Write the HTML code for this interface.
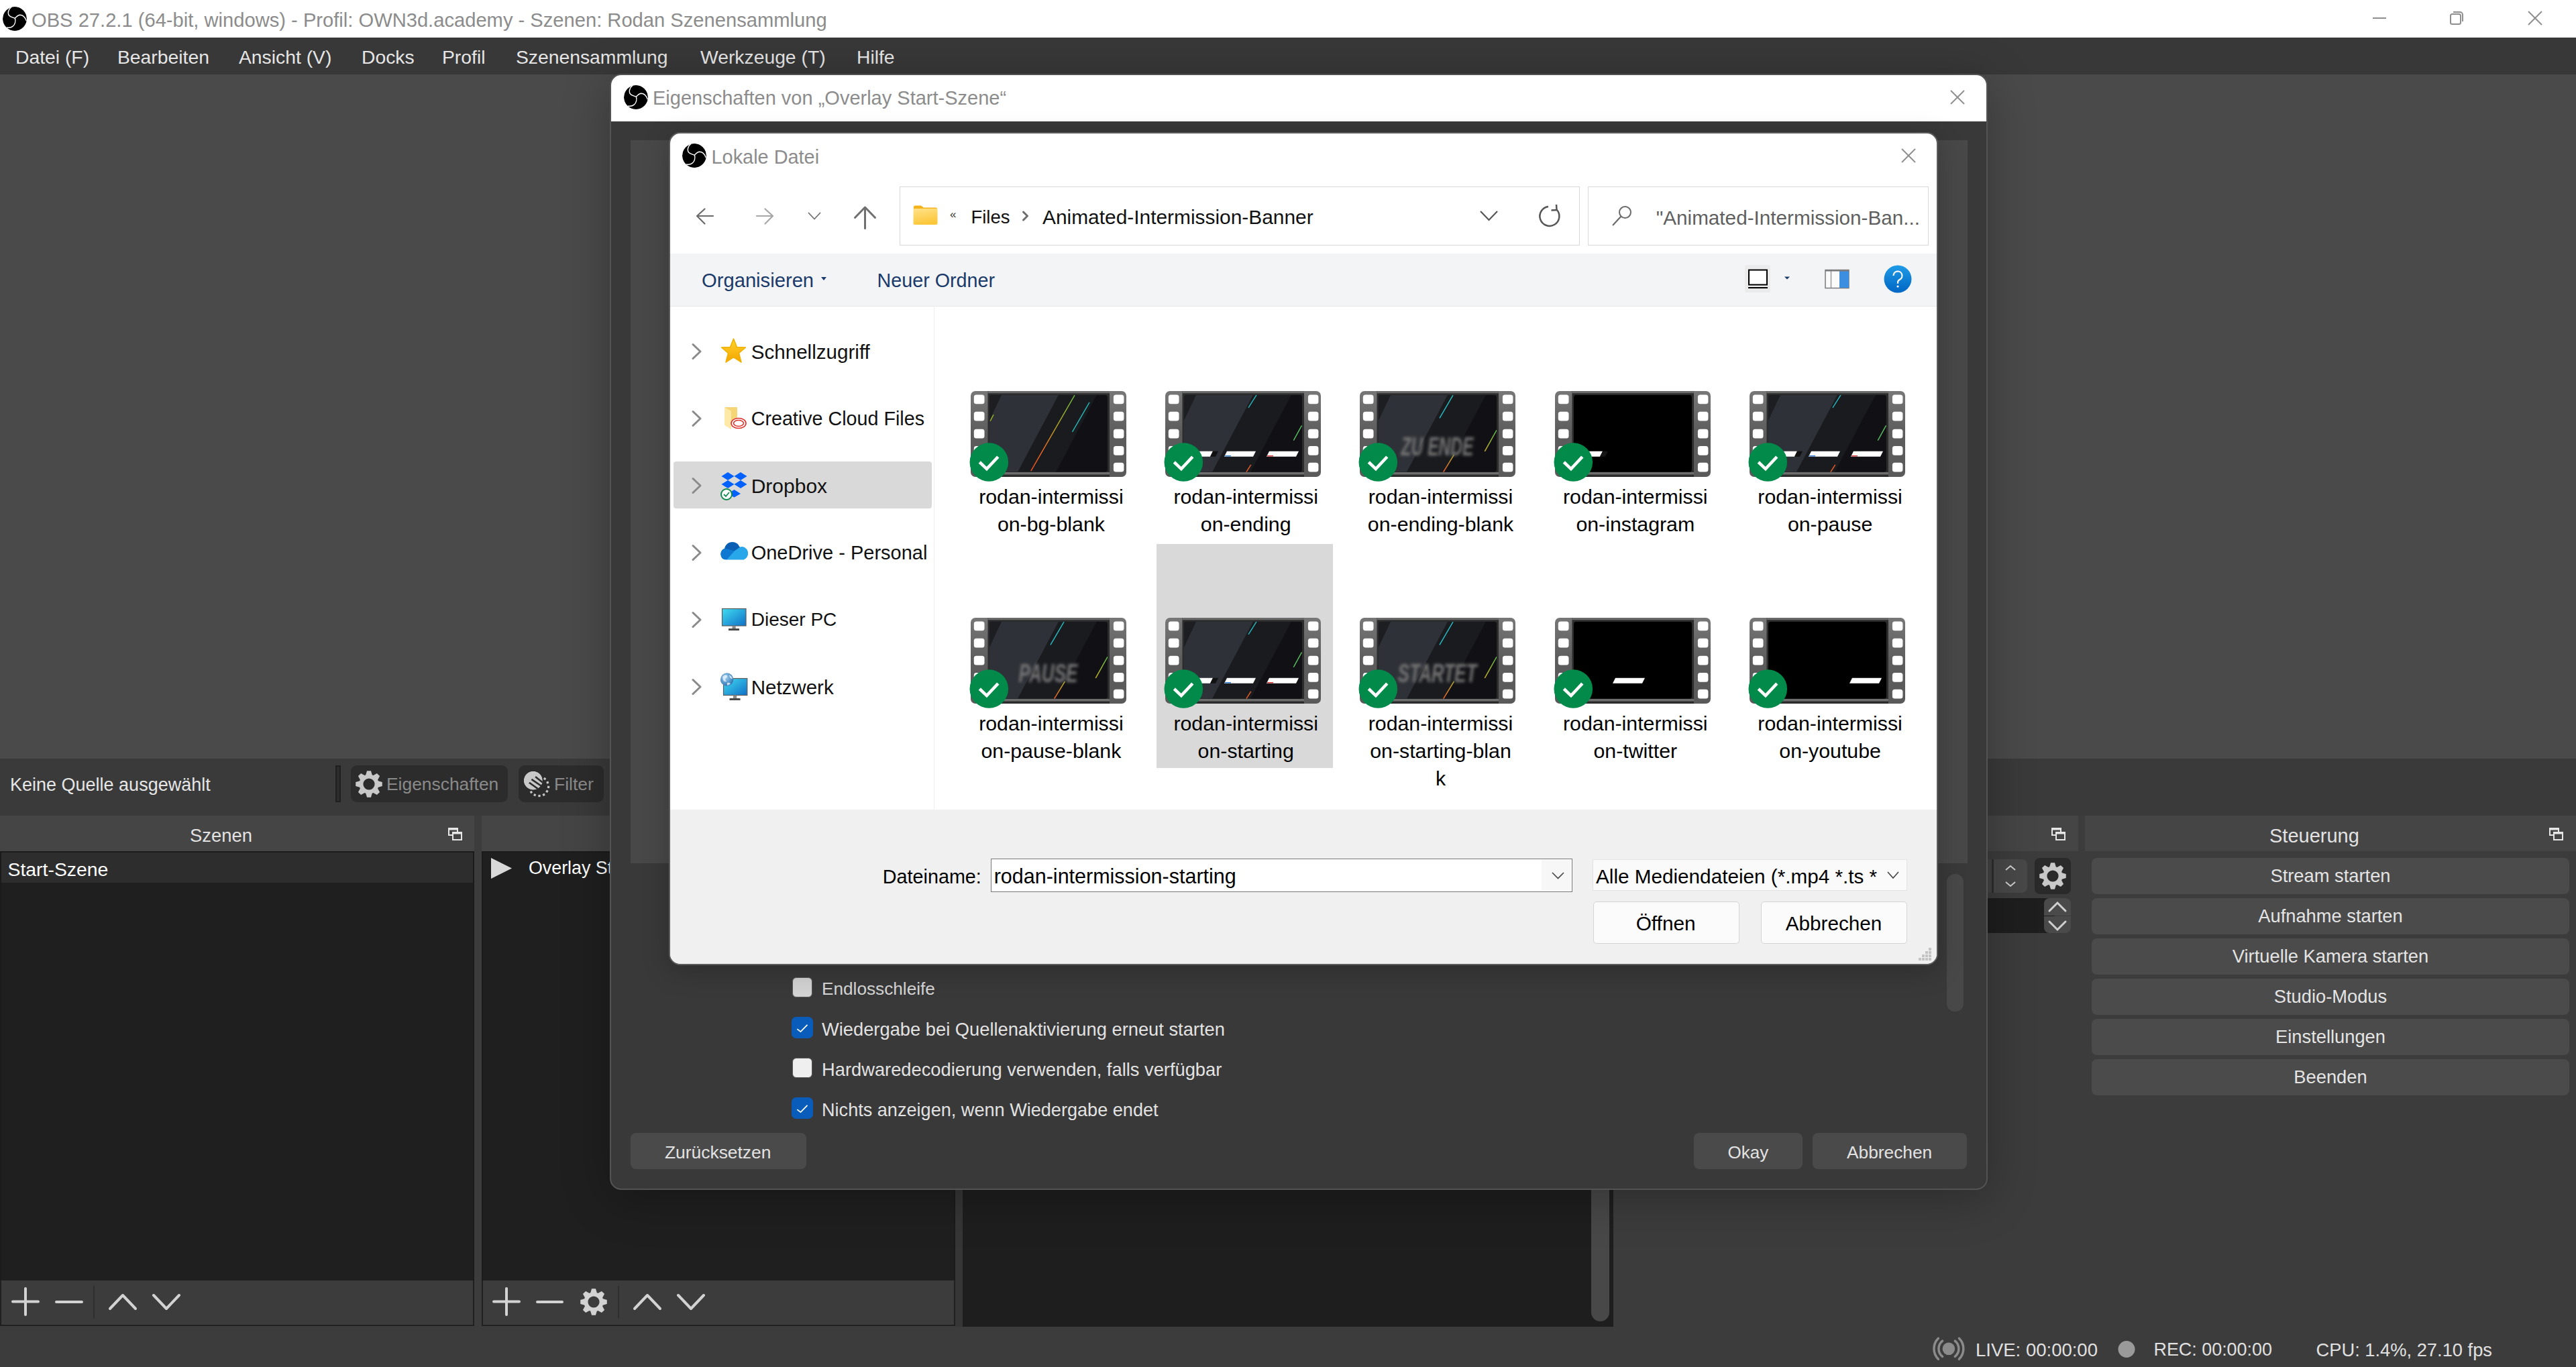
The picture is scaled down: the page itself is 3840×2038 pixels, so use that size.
<!DOCTYPE html>
<html><head><meta charset="utf-8">
<style>
*{box-sizing:border-box;margin:0;padding:0}
html,body{width:3840px;height:2038px;overflow:hidden;background:#3c3c3c;font-family:"Liberation Sans",sans-serif}
.a{position:absolute}
.t{position:absolute;white-space:pre;line-height:1}
svg{position:absolute;overflow:visible}
#menubar span{position:absolute;top:71px;font-size:28.3px;color:#e6e6e6;white-space:pre;line-height:1}
.dockhead{position:absolute;top:1216px;height:53px;background:#454545}
.docklist{position:absolute;top:1269px;height:640px;background:#1f1f1f;border:2px solid #1b1b1b;border-bottom:none}
.docktool{position:absolute;top:1909px;height:68px;background:#3c3c3c;border:2px solid #202020;border-top:none}
.dtitle{position:absolute;top:15.5px;font-size:27.4px;color:#e2e2e2;white-space:pre;line-height:1}
.ctrlbtn{position:absolute;left:3118px;width:712px;height:54px;background:#4b4b4b;border-radius:8px;color:#e4e4e4;font-size:27.3px;text-align:center;line-height:54px;white-space:pre}
.fn{width:300px;text-align:center;font-size:30.3px;color:#000}
.ico{stroke:#d2d2d2;stroke-width:4;fill:none;stroke-linecap:round;stroke-linejoin:round}
</style></head>
<body>
<!-- ===== TITLE BAR ===== -->
<div class="a" style="left:0;top:0;width:3840px;height:56px;background:#fff"></div>
<svg style="left:4px;top:10px" width="36" height="36" viewBox="0 0 100 100" id="obslogo">
  <defs><clipPath id="oc"><circle cx="50" cy="50" r="50"/></clipPath></defs>
  <g id="obsg" clip-path="url(#oc)">
    <circle cx="50" cy="50" r="50" fill="#000"/>
    <g fill="none" stroke="#fff" stroke-linecap="butt">
      <path d="M36 1 C 24 10, 19 27, 27 37 C 33 44, 44 45, 51 48" stroke-width="4"/>
      <path d="M51 48 C 55 60, 51 74, 42 81 C 35 87, 26 88, 16 86" stroke-width="4"/>
      <path d="M51 48 C 56 42, 63 35, 71 34 C 81 34, 92 42, 98 58" stroke-width="4"/>
    </g>
  </g>
</svg>
<div class="t" style="left:47px;top:15.6px;font-size:29.15px;color:#8c8c8c">OBS 27.2.1 (64-bit, windows) - Profil: OWN3d.academy - Szenen: Rodan Szenensammlung</div>
<svg style="left:0;top:0" width="3840" height="56">
  <g stroke="#8f8f8f" stroke-width="2" fill="none">
    <line x1="3537" y1="27" x2="3557" y2="27"/>
    <rect x="3653" y="21" width="15" height="15" rx="2.5"/>
    <path d="M3657 18 h10 a4 4 0 0 1 4 4 v10"/>
    <line x1="3769" y1="17" x2="3789" y2="37"/>
    <line x1="3789" y1="17" x2="3769" y2="37"/>
  </g>
</svg>

<!-- ===== MENU BAR ===== -->
<div id="menubar">
  <div class="a" style="left:0;top:56px;width:3840px;height:55px;background:#383838"></div>
  <span style="left:23px">Datei (F)</span>
  <span style="left:175px">Bearbeiten</span>
  <span style="left:356px">Ansicht (V)</span>
  <span style="left:539px">Docks</span>
  <span style="left:659px">Profil</span>
  <span style="left:769px">Szenensammlung</span>
  <span style="left:1044px">Werkzeuge (T)</span>
  <span style="left:1277px">Hilfe</span>
</div>

<!-- ===== PREVIEW ===== -->
<div class="a" style="left:0;top:111px;width:3840px;height:1020px;background:#4a4a4a"></div>

<!-- ===== SOURCE TOOLBAR ===== -->
<div class="a" style="left:0;top:1131px;width:3840px;height:85px;background:#3a3a3a"></div>
<div class="t" style="left:15px;top:1156.5px;font-size:27px;color:#e6e6e6">Keine Quelle ausgewählt</div>
<div class="a" style="left:500px;top:1141px;width:8px;height:55px;background:#1e1e1e;border:2px solid #202020"></div>
<div class="a" style="left:502px;top:1143px;width:4px;height:51px;background:#2c2c2c"></div>
<div class="a" style="left:523px;top:1141px;width:234px;height:55px;background:#2c2c2c;border-radius:9px"></div>
<svg style="left:526px;top:1145px" width="48" height="48"><path fill="#c8c8c8" fill-rule="evenodd" d="M19.25 10.20 L21.04 4.22 L26.96 4.22 L28.75 10.20 L30.40 10.88 L35.90 7.92 L40.08 12.10 L37.12 17.60 L37.80 19.25 L43.78 21.04 L43.78 26.96 L37.80 28.75 L37.12 30.40 L40.08 35.90 L35.90 40.08 L30.40 37.12 L28.75 37.80 L26.96 43.78 L21.04 43.78 L19.25 37.80 L17.60 37.12 L12.10 40.08 L7.92 35.90 L10.88 30.40 L10.20 28.75 L4.22 26.96 L4.22 21.04 L10.20 19.25 L10.88 17.60 L7.92 12.10 L12.10 7.92 L17.60 10.88Z M32.60 24.00 A8.6 8.6 0 1 0 15.40 24.00 A8.6 8.6 0 1 0 32.60 24.00Z"/></svg>
<div class="t" style="left:576px;top:1156px;font-size:26.4px;color:#8a8a8a">Eigenschaften</div>
<div class="a" style="left:773px;top:1141px;width:127px;height:55px;background:#2c2c2c;border-radius:9px"></div>
<svg style="left:770px;top:1140px" width="60" height="60">
  <defs><clipPath id="fc"><circle cx="24.8" cy="23.7" r="14"/></clipPath></defs>
  <g clip-path="url(#fc)"><circle cx="24.8" cy="23.7" r="14" fill="#c8c8c8"/>
  <g stroke="#2c2c2c" stroke-width="2.6"><line x1="28.1" y1="18" x2="42" y2="29"/><line x1="22.4" y1="21.9" x2="38" y2="32.5"/><line x1="18.9" y1="26.8" x2="34" y2="37.5"/></g>
  <polygon points="44,23.5 27.5,42 50,50 50,20" fill="#2c2c2c"/>
  </g>
  <path d="M24.8 23.7 L40 14 L44 40 L18 42Z" fill="none"/>
  <g fill="#c8c8c8"><rect x="40.5" y="19.5" width="3.2" height="3.2" transform="rotate(-50 42.1 21.1)"/><rect x="44.7" y="25.0" width="3.2" height="3.2" transform="rotate(-21 46.3 26.6)"/><rect x="46.0" y="31.8" width="3.2" height="3.2" transform="rotate(7 47.6 33.4)"/><rect x="43.8" y="38.1" width="3.2" height="3.2" transform="rotate(34 45.4 39.7)"/><rect x="39.0" y="43.2" width="3.2" height="3.2" transform="rotate(61 40.6 44.8)"/><rect x="32.4" y="44.9" width="3.2" height="3.2" transform="rotate(88 34.0 46.5)"/><rect x="25.6" y="43.6" width="3.2" height="3.2" transform="rotate(115 27.2 45.2)"/><rect x="20.3" y="39.4" width="3.2" height="3.2" transform="rotate(141 21.9 41.0)"/></g>
</svg>
<div class="t" style="left:826px;top:1156px;font-size:26.5px;color:#8a8a8a">Filter</div>

<!-- ===== DOCKS ===== -->
<div class="dockhead" style="left:0;width:707px"><span class="dtitle" style="left:283px">Szenen</span></div>
<div class="docklist" style="left:0;width:707px"></div>
<div class="a" style="left:2px;top:1271px;width:703px;height:45px;background:#2d2d2d"></div>
<div class="t" style="left:11.5px;top:1281.8px;font-size:28.4px;color:#fff">Start-Szene</div>
<div class="docktool" style="left:0;width:707px"></div>

<div class="dockhead" style="left:718px;width:706px"></div>
<div class="docklist" style="left:718px;width:706px"></div>
<svg style="left:732px;top:1279px" width="32" height="31"><path d="M0 0 L31 15.5 L0 31Z" fill="#d8d8d8"/></svg>
<div class="t" style="left:788px;top:1281px;font-size:26.8px;color:#fff">Overlay Start-Szene</div>
<div class="docktool" style="left:718px;width:706px"></div>

<div class="dockhead" style="left:1435px;width:970px"></div>
<div class="a" style="left:1435px;top:1269px;width:970px;height:709px;background:#1e1e1e"></div>
<div class="a" style="left:2372px;top:1300px;width:27px;height:670px;background:#484848;border-radius:0 0 14px 14px"></div>
<div class="a" style="left:1424px;top:1216px;width:11px;height:762px;background:#363636"></div>

<div class="dockhead" style="left:2415px;width:683px"></div>
<div class="dockhead" style="left:3108px;width:732px"><span class="dtitle" style="left:275px;top:15.5px;font-size:29px">Steuerung</span></div>
<div class="ctrlbtn" style="top:1279px">Stream starten</div>
<div class="ctrlbtn" style="top:1339px">Aufnahme starten</div>
<div class="ctrlbtn" style="top:1399px">Virtuelle Kamera starten</div>
<div class="ctrlbtn" style="top:1459px">Studio-Modus</div>
<div class="ctrlbtn" style="top:1519px">Einstellungen</div>
<div class="ctrlbtn" style="top:1579px">Beenden</div>

<!-- dock toolbars icons -->
<svg style="left:0;top:1900px" width="1440" height="80">
  <g class="ico">
    <line x1="38" y1="21" x2="38" y2="60"/><line x1="19" y1="40.5" x2="57" y2="40.5"/>
    <line x1="84" y1="41" x2="122" y2="41"/>
    <polyline points="164,51 183,31 202,51"/>
    <polyline points="229,31 248,51 267,31"/>
    <line x1="755" y1="21" x2="755" y2="60"/><line x1="736" y1="40.5" x2="774" y2="40.5"/>
    <line x1="801" y1="41" x2="838" y2="41"/>
    <polyline points="946,51 965,31 984,51"/>
    <polyline points="1011,31 1030,51 1049,31"/>
  </g>
  <line x1="140" y1="17" x2="140" y2="65" stroke="#2e2e2e" stroke-width="2"/>
  <line x1="922" y1="17" x2="922" y2="65" stroke="#2e2e2e" stroke-width="2"/>
</svg>
<svg style="left:861px;top:1917px" width="48" height="48"><path fill="#d2d2d2" fill-rule="evenodd" d="M19.25 10.20 L21.04 4.22 L26.96 4.22 L28.75 10.20 L30.40 10.88 L35.90 7.92 L40.08 12.10 L37.12 17.60 L37.80 19.25 L43.78 21.04 L43.78 26.96 L37.80 28.75 L37.12 30.40 L40.08 35.90 L35.90 40.08 L30.40 37.12 L28.75 37.80 L26.96 43.78 L21.04 43.78 L19.25 37.80 L17.60 37.12 L12.10 40.08 L7.92 35.90 L10.88 30.40 L10.20 28.75 L4.22 26.96 L4.22 21.04 L10.20 19.25 L10.88 17.60 L7.92 12.10 L12.10 7.92 L17.60 10.88Z M32.60 24.00 A8.6 8.6 0 1 0 15.40 24.00 A8.6 8.6 0 1 0 32.60 24.00Z"/></svg>

<!-- undock icons -->
<svg style="left:0;top:1230px" width="3840" height="30">
  <g fill="none" stroke="#e6e6e6" stroke-width="2">
    <rect x="669" y="5" width="13" height="10"/><rect x="675" y="11" width="13" height="11" fill="#454545"/>
    <rect x="3059" y="5" width="13" height="10"/><rect x="3065" y="11" width="13" height="11" fill="#454545"/>
    <rect x="3801" y="5" width="13" height="10"/><rect x="3807" y="11" width="13" height="11" fill="#454545"/>
  </g>
  <g stroke="#e6e6e6" stroke-width="3">
    <line x1="669" y1="6" x2="682" y2="6"/><line x1="675" y1="12" x2="688" y2="12"/>
    <line x1="3059" y1="6" x2="3072" y2="6"/><line x1="3065" y1="12" x2="3078" y2="12"/>
    <line x1="3801" y1="6" x2="3814" y2="6"/><line x1="3807" y1="12" x2="3820" y2="12"/>
  </g>
</svg>

<!-- transitions dock widgets -->
<div class="a" style="left:2963px;top:1281px;width:34px;height:50px;background:#434343"></div>
<div class="a" style="left:2972px;top:1281px;width:50px;height:50px;background:#484848;border-radius:0 8px 8px 0"></div>
<div class="a" style="left:2969px;top:1281px;width:3px;height:50px;background:#2e2e2e"></div>
<svg style="left:2972px;top:1281px" width="50" height="50"><g fill="none" stroke="#d0d0d0" stroke-width="2"><polyline points="18,16 25,10 32,16"/><polyline points="18,34 25,40 32,34"/></g></svg>
<div class="a" style="left:3033px;top:1279px;width:54px;height:54px;background:#2a2a2a;border-radius:8px"></div>
<svg style="left:3036px;top:1282px" width="48" height="48"><path fill="#c8c8c8" fill-rule="evenodd" d="M19.25 10.20 L21.04 4.22 L26.96 4.22 L28.75 10.20 L30.40 10.88 L35.90 7.92 L40.08 12.10 L37.12 17.60 L37.80 19.25 L43.78 21.04 L43.78 26.96 L37.80 28.75 L37.12 30.40 L40.08 35.90 L35.90 40.08 L30.40 37.12 L28.75 37.80 L26.96 43.78 L21.04 43.78 L19.25 37.80 L17.60 37.12 L12.10 40.08 L7.92 35.90 L10.88 30.40 L10.20 28.75 L4.22 26.96 L4.22 21.04 L10.20 19.25 L10.88 17.60 L7.92 12.10 L12.10 7.92 L17.60 10.88Z M32.60 24.00 A8.6 8.6 0 1 0 15.40 24.00 A8.6 8.6 0 1 0 32.60 24.00Z"/></svg>
<div class="a" style="left:2963px;top:1339px;width:100px;height:52px;background:#1e1e1e"></div>
<div class="a" style="left:3047px;top:1339px;width:40px;height:26px;background:#4a4a4a;border-radius:8px 8px 0 0"></div>
<div class="a" style="left:3047px;top:1366px;width:40px;height:25px;background:#4a4a4a;border-radius:0 0 8px 8px"></div>
<svg style="left:3047px;top:1339px" width="40" height="52"><g fill="none" stroke="#d0d0d0" stroke-width="3" stroke-linecap="round"><polyline points="8,19 20,7 32,19"/><polyline points="8,35 20,47 32,35"/></g></svg>

<!-- ===== STATUS BAR ===== -->
<svg style="left:2870px;top:1985px" width="70" height="53">
  <circle cx="34.9" cy="25.8" r="9.3" fill="#8c8b8c"/>
  <g fill="none" stroke="#8c8b8c" stroke-width="3.5" stroke-linecap="round">
    <path d="M25.5 14.2 A14.9 14.9 0 0 0 25.5 37.4"/><path d="M44.3 14.2 A14.9 14.9 0 0 1 44.3 37.4"/>
    <path d="M19.4 10.3 A21.9 21.9 0 0 0 19.4 41.3"/><path d="M50.4 10.3 A21.9 21.9 0 0 1 50.4 41.3"/>
  </g>
</svg>
<div class="t" style="left:2945px;top:1998.6px;font-size:27.5px;color:#e0e0e0">LIVE: 00:00:00</div>
<svg style="left:3157px;top:1999px" width="26" height="26"><circle cx="13" cy="12.5" r="12.5" fill="#9a9a9a"/></svg>
<div class="t" style="left:3210.5px;top:1998.6px;font-size:26.9px;color:#e0e0e0">REC: 00:00:00</div>
<div class="t" style="left:3452.5px;top:1998.6px;font-size:27.3px;color:#e0e0e0">CPU: 1.4%, 27.10 fps</div>

<!-- ===== PROPERTIES DIALOG ===== -->
<div id="props" class="a" style="left:909px;top:110px;width:2054px;height:1664px;background:#393939;border:2px solid #535353;border-radius:17px;overflow:hidden;box-shadow:0 12px 70px rgba(0,0,0,0.28)">
  <div class="a" style="left:0;top:0;width:100%;height:69px;background:#fff"></div>
</div>
<svg style="left:930px;top:127px" width="36" height="36" viewBox="0 0 100 100"><use href="#obsg"/></svg>
<div class="t" style="left:973px;top:132.3px;font-size:29px;color:#8c8c8c">Eigenschaften von „Overlay Start-Szene“</div>
<svg style="left:2903px;top:130px" width="30" height="30"><g stroke="#8f8f8f" stroke-width="2"><line x1="5" y1="5" x2="25" y2="25"/><line x1="25" y1="5" x2="5" y2="25"/></g></svg>
<div class="a" style="left:940px;top:209px;width:1993px;height:1078px;background:#484848"></div>
<div class="a" style="left:2902px;top:1303px;width:25px;height:205px;background:#484848;border-radius:12px"></div>
<!-- checkboxes -->
<div class="a" style="left:1181px;top:1457px;width:30px;height:30px;background:#d3d3d3;border:1.5px solid #5a5a5a;border-radius:6px"></div>
<div class="a" style="left:1180px;top:1516px;width:32px;height:32px;background:#0a5cbb;border-radius:7px"></div>
<div class="a" style="left:1181px;top:1577px;width:30px;height:30px;background:#efefef;border:1.5px solid #5a5a5a;border-radius:6px"></div>
<div class="a" style="left:1180px;top:1636px;width:32px;height:32px;background:#0a5cbb;border-radius:7px"></div>
<svg style="left:1180px;top:1516px" width="32" height="32"><polyline points="8.3,18.1 13.5,22.1 23.5,11.9" fill="none" stroke="#fff" stroke-width="1.8"/></svg>
<svg style="left:1180px;top:1636px" width="32" height="32"><polyline points="8.3,18.1 13.5,22.1 23.5,11.9" fill="none" stroke="#fff" stroke-width="1.8"/></svg>
<div class="t" style="left:1225px;top:1461.3px;font-size:26.2px;color:#d6d6d6">Endlosschleife</div>
<div class="t" style="left:1225px;top:1520.5px;font-size:27.3px;color:#e2e2e2">Wiedergabe bei Quellenaktivierung erneut starten</div>
<div class="t" style="left:1225px;top:1581.1px;font-size:27.3px;color:#e2e2e2">Hardwaredecodierung verwenden, falls verfügbar</div>
<div class="t" style="left:1225px;top:1641.1px;font-size:27.1px;color:#e2e2e2">Nichts anzeigen, wenn Wiedergabe endet</div>
<!-- buttons -->
<div class="a" style="left:940px;top:1689px;width:262px;height:54px;background:#4a4a4a;border-radius:8px"></div>
<div class="t" style="left:991px;top:1705px;font-size:26.4px;color:#e2e2e2">Zurücksetzen</div>
<div class="a" style="left:2525px;top:1689px;width:162px;height:54px;background:#4a4a4a;border-radius:8px"></div>
<div class="t" style="left:2575.5px;top:1705px;font-size:26px;color:#e2e2e2">Okay</div>
<div class="a" style="left:2702px;top:1689px;width:230px;height:54px;background:#4a4a4a;border-radius:8px"></div>
<div class="t" style="left:2753px;top:1704.6px;font-size:26.3px;color:#e2e2e2">Abbrechen</div>

<!-- ===== FILE DIALOG ===== -->
<div id="fd" class="a" style="left:997px;top:197px;width:1892px;height:1242px;background:#fff;border:2px solid #5c5c5c;border-radius:17px;overflow:hidden;box-shadow:0 8px 40px rgba(0,0,0,0.22)">
  <div class="a" style="left:0;top:179px;width:1888px;height:79px;background:#f3f4f6;border-bottom:1px solid #e6e7e9"></div>
  <div class="a" style="left:393px;top:258px;width:1px;height:750px;background:#efefef"></div>
  <div class="a" style="left:0;top:1008px;width:1888px;height:230px;background:#f0f0f0"></div>
</div>
<svg style="left:1017px;top:214px" width="36" height="36" viewBox="0 0 100 100"><use href="#obsg"/></svg>
<div class="t" style="left:1060.5px;top:219.6px;font-size:28.9px;color:#8c8c8c">Lokale Datei</div>
<svg style="left:2830px;top:217px" width="30" height="30"><g stroke="#8f8f8f" stroke-width="2"><line x1="5" y1="5" x2="25" y2="25"/><line x1="25" y1="5" x2="5" y2="25"/></g></svg>
<!-- nav buttons -->
<svg style="left:1030px;top:300px" width="290" height="50">
  <g fill="none" stroke-linecap="round" stroke-linejoin="round">
    <g stroke="#6b6b6b" stroke-width="2.2"><polyline points="20.5,11.5 9,22 20.5,33.5"/><line x1="9.5" y1="22" x2="33" y2="22"/></g>
    <g stroke="#a6a6a6" stroke-width="2.2"><polyline points="110.5,11.5 122,22 110.5,33.5"/><line x1="98" y1="22" x2="121.5" y2="22"/></g>
    <polyline points="175.5,17.5 184,26.5 192.5,17.5" stroke="#707070" stroke-width="1.8"/>
    <g stroke="#707070" stroke-width="3"><polyline points="244.5,24.5 259.5,9 274.5,24.5"/><line x1="259.5" y1="9.5" x2="259.5" y2="40.5"/></g>
  </g>
</svg>
<!-- address bar -->
<div class="a" style="left:1341px;top:278px;width:1014px;height:88px;border:1.5px solid #dadada;background:#fff"></div>
<svg style="left:1361px;top:306px" width="37" height="30" viewBox="0 0 37 30">
  <defs><linearGradient id="fg" x1="0" y1="0" x2="0.3" y2="1"><stop offset="0" stop-color="#ffe28a"/><stop offset="1" stop-color="#fcc73a"/></linearGradient></defs>
  <path d="M1 2.5 a2 2 0 0 1 2-2 h9 l4 3 h18 a2 2 0 0 1 2 2 v3 H1z" fill="#f4b21b"/>
  <rect x="0.5" y="5" width="36" height="24" rx="2" fill="url(#fg)"/>
</svg>
<div class="t" style="left:1416px;top:311px;font-size:17px;color:#333">«</div>
<div class="t" style="left:1447.4px;top:310.1px;font-size:27.5px;color:#111">Files</div>
<svg style="left:1520px;top:312px" width="18" height="20"><polyline points="5.5,4 11.5,10 5.5,16" fill="none" stroke="#6e6e6e" stroke-width="3" stroke-linecap="round" stroke-linejoin="round"/></svg>
<div class="t" style="left:1554px;top:308.5px;font-size:29.9px;color:#111">Animated-Intermission-Banner</div>
<svg style="left:2200px;top:300px" width="140" height="50">
  <polyline points="7,15 19.5,28 32,15" fill="none" stroke="#555" stroke-width="2.2"/>
  <path d="M120.5 12.5 A14.5 14.5 0 1 1 108 8" fill="none" stroke="#555" stroke-width="2.5"/>
  <polyline points="120,5 120.5,13 112.5,13.5" fill="none" stroke="#555" stroke-width="2.5"/>
</svg>
<div class="a" style="left:2367px;top:278px;width:508px;height:88px;border:1.5px solid #dadada;background:#fff"></div>
<svg style="left:2400px;top:304px" width="36" height="36"><circle cx="22.5" cy="12.5" r="8.5" fill="none" stroke="#6a6a6a" stroke-width="2"/><line x1="16.5" y1="18.5" x2="4" y2="32" stroke="#6a6a6a" stroke-width="2.2"/></svg>
<div class="t" style="left:2468.7px;top:310.1px;font-size:29.7px;color:#5f5f5f">"Animated-Intermission-Ban...</div>
<!-- toolbar -->
<div class="t" style="left:1046px;top:404.2px;font-size:29.2px;color:#1a3a6a">Organisieren</div>
<svg style="left:1222px;top:410px" width="14" height="10"><path d="M2 3 L10 3 L6 8Z" fill="#1a3a6a"/></svg>
<div class="t" style="left:1307.6px;top:404.2px;font-size:28.7px;color:#1a3a6a">Neuer Ordner</div>
<div class="a" style="left:2601px;top:395px;width:38px;height:41px;background:#ebebeb;border-radius:3px"></div>
<svg style="left:2600px;top:395px" width="280" height="45">
  <rect x="7" y="7.5" width="27" height="22" fill="#fff" stroke="#000" stroke-width="2"/>
  <line x1="6" y1="34" x2="35" y2="34" stroke="#000" stroke-width="2"/>
  <path d="M60 17.5 h8 l-4 4z" fill="#1a3a6a"/>
  <rect x="121" y="7.5" width="35" height="27" fill="#fbfbfb" stroke="#7a7a7a" stroke-width="1.5"/>
  <line x1="129.5" y1="8" x2="129.5" y2="34" stroke="#9a9a9a" stroke-width="1.5"/>
  <rect x="142" y="9" width="14" height="25" fill="#3c8fe0"/>
  <line x1="121" y1="8.5" x2="156" y2="8.5" stroke="#7a7a7a" stroke-width="2"/>
  <defs><linearGradient id="hg" x1="0" y1="0" x2="0" y2="1"><stop offset="0" stop-color="#1f9be6"/><stop offset="1" stop-color="#0066c4"/></linearGradient></defs>
  <circle cx="229" cy="21" r="20.5" fill="url(#hg)"/>
  <path d="M222.5 16 a6.5 6.5 0 1 1 9.5 5.8 c-2 1-3 2.3-3 4.5 v1.5" fill="none" stroke="#fff" stroke-width="2.2"/>
  <circle cx="229" cy="32" r="1.6" fill="#fff"/>
</svg>

<!-- nav pane -->
<div class="a" style="left:1004px;top:688px;width:385px;height:70px;background:#d9d9d9;border-radius:4px"></div>
<svg style="left:1025px;top:500px" width="100" height="560">
  <g fill="none" stroke="#8a8a8a" stroke-width="3" stroke-linecap="round" stroke-linejoin="round">
    <polyline points="8,13.5 19,24 8,34.5"/>
    <polyline points="8,113.5 19,124 8,134.5"/>
    <polyline points="8,213.5 19,224 8,234.5"/>
    <polyline points="8,313.5 19,324 8,334.5"/>
    <polyline points="8,413.5 19,424 8,434.5"/>
    <polyline points="8,513.5 19,524 8,534.5"/>
  </g>
  <defs>
    <linearGradient id="sg" x1="0" y1="0" x2="0" y2="1"><stop offset="0" stop-color="#ffd52a"/><stop offset="1" stop-color="#f5a300"/></linearGradient>
    <linearGradient id="cf" x1="0" y1="0" x2="1" y2="1"><stop offset="0" stop-color="#ffe79a"/><stop offset="1" stop-color="#f3c24a"/></linearGradient>
    <linearGradient id="pc" x1="0" y1="0" x2="1" y2="1"><stop offset="0" stop-color="#40dcf0"/><stop offset="1" stop-color="#1070c8"/></linearGradient>
    <linearGradient id="od" x1="0" y1="0" x2="0" y2="1"><stop offset="0" stop-color="#0a64c8"/><stop offset="1" stop-color="#28a8ea"/></linearGradient>
  </defs>
  <!-- star -->
  <path d="M68.5 5 L73.5 17.5 L86.5 18 L76.5 26.5 L80 40 L68.5 32.5 L57 40 L60.5 26.5 L50.5 18 L63.5 17.5Z" fill="url(#sg)" stroke="#f0b000" stroke-width="1.5" stroke-linejoin="round"/>
  <!-- creative cloud folder -->
  <path d="M56 107 h18 v24 h-18z" fill="#f5d677"/>
  <path d="M55 107 l10 6 v27 l-10 -6z" fill="#ffe9a8"/>
  <ellipse cx="76" cy="131" rx="12" ry="8.5" fill="#fff"/><g fill="none" stroke="#e0302a" stroke-width="1.6"><ellipse cx="76" cy="131" rx="11" ry="7.5"/><ellipse cx="76" cy="131" rx="7.5" ry="4.5"/></g>
  <!-- dropbox -->
  <g fill="#0061fe">
    <path d="M60 204 l9.5 6 -9.5 6 -9.5 -6z"/><path d="M79 204 l9.5 6 -9.5 6 -9.5 -6z"/>
    <path d="M60 216 l9.5 6 -9.5 6 -9.5 -6z"/><path d="M79 216 l9.5 6 -9.5 6 -9.5 -6z"/>
    <path d="M69.5 230 l9.5 6 -9.5 5.5 -9.5 -5.5z"/>
  </g>
  <circle cx="58" cy="237" r="8" fill="#fff" stroke="#0f8a4a" stroke-width="2"/>
  <polyline points="54,237 57,240 62,234" fill="none" stroke="#0f8a4a" stroke-width="1.8"/>
  <!-- onedrive -->
  <g transform="translate(49,322) scale(0.87,0.95) translate(-49,-322)">
  <path d="M58 335 a9 9 0 0 1 -2 -17.5 a14 14 0 0 1 26 -2 a10 10 0 0 1 7 19.5z" fill="#1a8ee0"/>
  <path d="M56 317.5 a14 14 0 0 1 26 -2 l-9 6z" fill="#0a5fb4"/>
  <path d="M50 330 a9 9 0 0 1 6 -12.5 l17 4 l-13 13.5 h-3 a8 8 0 0 1 -7 -5z" fill="#0f78d0"/>
  <path d="M60 335 l13 -13.5 l10 -6 a10 10 0 0 1 6 19.5z" fill="#28a8ea"/>
  </g>
  <!-- PC -->
  <rect x="51.5" y="407.5" width="35.5" height="25.5" fill="url(#pc)" stroke="#5a5a5a" stroke-width="1.2"/>
  <rect x="66.5" y="433" width="5.2" height="5" fill="#8a8a8a"/>
  <rect x="61" y="437" width="16" height="3" fill="#4a4a4a"/>
  <!-- network -->
  <rect x="53.5" y="511.5" width="35.3" height="25" fill="url(#pc)" stroke="#5a5a5a" stroke-width="1.2"/>
  <rect x="68" y="536.5" width="5.2" height="5" fill="#8a8a8a"/>
  <rect x="62.5" y="541" width="16" height="3" fill="#4a4a4a"/>
  <defs><radialGradient id="gl" cx="0.4" cy="0.35" r="0.7"><stop offset="0" stop-color="#9fd0f0"/><stop offset="1" stop-color="#2a70b0"/></radialGradient></defs>
  <circle cx="58.6" cy="513" r="9.7" fill="url(#gl)"/>
  <path d="M52 509 q3 -4 7 -2 q1 3 -2 4 q-2 2 1 5 q-3 1 -5 -2z M62 506 q4 2 5 6 q-3 0 -4 -2z M59 518 q3 -1 5 1 q-2 3 -5 3z" fill="#e8f4fb" opacity="0.8"/>
</svg>
<div class="t" style="left:1119.7px;top:509.9px;font-size:29.6px;color:#111">Schnellzugriff</div>
<div class="t" style="left:1119.7px;top:610px;font-size:28.7px;color:#111">Creative Cloud Files</div>
<div class="t" style="left:1119.7px;top:710px;font-size:30px;color:#111">Dropbox</div>
<div class="t" style="left:1119.7px;top:810px;font-size:29px;color:#111">OneDrive - Personal</div>
<div class="t" style="left:1119.7px;top:910px;font-size:28px;color:#111">Dieser PC</div>
<div class="t" style="left:1119.7px;top:1010px;font-size:29.5px;color:#111">Netzwerk</div>

<!-- content selection -->
<div class="a" style="left:1724px;top:811px;width:263px;height:334px;background:#d9d9d9"></div>

<!-- thumbnails -->
<svg style="left:0;top:0" width="0" height="0">
<defs>
  <linearGradient id="lg1" x1="0" y1="0" x2="0" y2="1"><stop offset="0" stop-color="#6ac040"/><stop offset="0.45" stop-color="#c0a020"/><stop offset="0.7" stop-color="#f06a20"/><stop offset="1" stop-color="#f05020"/></linearGradient>
  <linearGradient id="strip" x1="0" y1="0" x2="0" y2="1"><stop offset="0" stop-color="#777"/><stop offset="0.5" stop-color="#5c5c5c"/><stop offset="1" stop-color="#5a5a5a"/></linearGradient>
  <linearGradient id="lg2" x1="0" y1="0" x2="0" y2="1"><stop offset="0" stop-color="#5cc44a"/><stop offset="1" stop-color="#d0b020"/></linearGradient>
  <linearGradient id="lg3" x1="0" y1="0" x2="0" y2="1"><stop offset="0" stop-color="#b0b030"/><stop offset="1" stop-color="#f05a20"/></linearGradient>
  <filter id="bl" x="-20%" y="-50%" width="140%" height="200%"><feGaussianBlur stdDeviation="2"/></filter>
  <g id="film">
    <rect x="0" y="0" width="232" height="128" rx="7" fill="url(#strip)"/>
    <rect x="25.5" y="0" width="181.5" height="128" fill="#2c2c2c"/>
    <rect x="25.5" y="0" width="181.5" height="3.3" fill="#6a6a6a"/>
    <rect x="25.5" y="121" width="181.5" height="3.5" fill="#6e6e6e"/>
    <g fill="#fff">
      <rect x="4.8" y="5.6" width="15.7" height="13.7" rx="3.5"/><rect x="4.8" y="30.7" width="15.7" height="13.7" rx="3.5"/><rect x="4.8" y="56.7" width="15.7" height="13.7" rx="3.5"/><rect x="4.8" y="82" width="15.7" height="13.7" rx="3.5"/><rect x="4.8" y="106.8" width="15.7" height="13.7" rx="3.5"/>
      <rect x="212.9" y="5.6" width="15.5" height="13.7" rx="3.5"/><rect x="212.9" y="30.7" width="15.5" height="13.7" rx="3.5"/><rect x="212.9" y="56.7" width="15.5" height="13.7" rx="3.5"/><rect x="212.9" y="82" width="15.5" height="13.7" rx="3.5"/><rect x="212.9" y="106.8" width="15.5" height="13.7" rx="3.5"/>
    </g>
  </g>
  <g id="badge">
    <circle cx="27.3" cy="106" r="28.8" fill="#018a4a"/>
    <polyline points="13.3,106 23.9,116.1 40.8,98" fill="none" stroke="#fff" stroke-width="4.6"/>
  </g>
  <clipPath id="scr"><rect x="0" y="0" width="176" height="115" rx="4"/></clipPath>
  <g id="darkbg">
    <rect x="0" y="0" width="176" height="115" fill="#1a1b1f"/>
    <polygon points="0,0 18,0 0,38" fill="#1d1e22"/>
    <polygon points="18,0 103,0 42,115 0,115 0,38" fill="#2e3137"/>
    <polygon points="160,0 176,0 176,115 99,115" fill="#111115"/>
  </g>
</defs></svg>
<svg style="left:1446.6px;top:583px" width="232" height="128"><use href="#film"/><g transform="translate(28,5.8)" clip-path="url(#scr)"><use href="#darkbg"/><line x1="127" y1="0.4" x2="61.8" y2="113.4" stroke="url(#lg1)" stroke-width="1.4"/><line x1="149" y1="11" x2="123.5" y2="55" stroke="#26b8b8" stroke-width="1.4"/><line x1="6" y1="29.5" x2="1.2" y2="39" stroke="#9ab820" stroke-width="1.4"/></g><use href="#badge"/></svg>
<div class="t fn" style="left:1416.9px;top:726.4px">rodan-intermissi</div>
<div class="t fn" style="left:1416.9px;top:767.2px">on-bg-blank</div>
<svg style="left:1736.9px;top:583px" width="232" height="128"><use href="#film"/><g transform="translate(28,5.8)" clip-path="url(#scr)"><use href="#darkbg"/><line x1="108" y1="0" x2="96" y2="19" stroke="#26b8c0" stroke-width="1.4"/><line x1="175.5" y1="45.6" x2="163.3" y2="67.9" stroke="#58c060" stroke-width="1.4"/><line x1="99.7" y1="104" x2="92.8" y2="115" stroke="#f0602a" stroke-width="1.4"/><polygon points="-5,84 43,84 39,92 -9,92" fill="#fff"/><polygon points="43,84 51,84 47,92 39,92" fill="#111"/><polygon points="64,84 107,84 103,92 60,92" fill="#fff"/><line x1="61" y1="91" x2="70" y2="91" stroke="#2a7ad0" stroke-width="1.5"/><polygon points="127,84 171,84 167,92 123,92" fill="#fff"/><line x1="124" y1="91" x2="133" y2="91" stroke="#d03030" stroke-width="1.5"/></g><use href="#badge"/></svg>
<div class="t fn" style="left:1707.2px;top:726.4px">rodan-intermissi</div>
<div class="t fn" style="left:1707.2px;top:767.2px">on-ending</div>
<svg style="left:2027.2px;top:583px" width="232" height="128"><use href="#film"/><g transform="translate(28,5.8)" clip-path="url(#scr)"><use href="#darkbg"/><line x1="111" y1="0.3" x2="91" y2="34.5" stroke="#26b8c0" stroke-width="1.5"/><line x1="176" y1="52.5" x2="158.3" y2="84" stroke="url(#lg2)" stroke-width="1.5"/><line x1="112.5" y1="89" x2="96.5" y2="115" stroke="url(#lg3)" stroke-width="1.5"/><text x="87.5" y="90" text-anchor="middle" font-family="Liberation Sans" font-weight="bold" font-style="italic" font-size="39" fill="#767676" filter="url(#bl)" textLength="108" lengthAdjust="spacingAndGlyphs">ZU ENDE</text></g><use href="#badge"/></svg>
<div class="t fn" style="left:1997.5px;top:726.4px">rodan-intermissi</div>
<div class="t fn" style="left:1997.5px;top:767.2px">on-ending-blank</div>
<svg style="left:2317.5px;top:583px" width="232" height="128"><use href="#film"/><g transform="translate(28,5.8)" clip-path="url(#scr)"><rect width="176" height="115" fill="#000"/><polygon points="-5,84 43,84 39,92 -9,92" fill="#fff"/><polygon points="43,84 51,84 47,92 39,92" fill="#151515"/></g><use href="#badge"/></svg>
<div class="t fn" style="left:2287.8px;top:726.4px">rodan-intermissi</div>
<div class="t fn" style="left:2287.8px;top:767.2px">on-instagram</div>
<svg style="left:2607.8px;top:583px" width="232" height="128"><use href="#film"/><g transform="translate(28,5.8)" clip-path="url(#scr)"><use href="#darkbg"/><line x1="108" y1="0" x2="96" y2="19" stroke="#26b8c0" stroke-width="1.4"/><line x1="175.5" y1="45.6" x2="163.3" y2="67.9" stroke="#58c060" stroke-width="1.4"/><line x1="99.7" y1="104" x2="92.8" y2="115" stroke="#f0602a" stroke-width="1.4"/><polygon points="-5,84 43,84 39,92 -9,92" fill="#fff"/><polygon points="43,84 51,84 47,92 39,92" fill="#111"/><polygon points="64,84 107,84 103,92 60,92" fill="#fff"/><line x1="61" y1="91" x2="70" y2="91" stroke="#2a7ad0" stroke-width="1.5"/><polygon points="127,84 171,84 167,92 123,92" fill="#fff"/><line x1="124" y1="91" x2="133" y2="91" stroke="#d03030" stroke-width="1.5"/></g><use href="#badge"/></svg>
<div class="t fn" style="left:2578.1px;top:726.4px">rodan-intermissi</div>
<div class="t fn" style="left:2578.1px;top:767.2px">on-pause</div>
<svg style="left:1446.6px;top:921px" width="232" height="128"><use href="#film"/><g transform="translate(28,5.8)" clip-path="url(#scr)"><use href="#darkbg"/><line x1="111" y1="0.3" x2="91" y2="34.5" stroke="#26b8c0" stroke-width="1.5"/><line x1="176" y1="52.5" x2="158.3" y2="84" stroke="url(#lg2)" stroke-width="1.5"/><line x1="112.5" y1="89" x2="96.5" y2="115" stroke="url(#lg3)" stroke-width="1.5"/><text x="87.5" y="90" text-anchor="middle" font-family="Liberation Sans" font-weight="bold" font-style="italic" font-size="39" fill="#767676" filter="url(#bl)" textLength="88" lengthAdjust="spacingAndGlyphs">PAUSE</text></g><use href="#badge"/></svg>
<div class="t fn" style="left:1416.9px;top:1064.4px">rodan-intermissi</div>
<div class="t fn" style="left:1416.9px;top:1105.2px">on-pause-blank</div>
<svg style="left:1736.9px;top:921px" width="232" height="128"><use href="#film"/><g transform="translate(28,5.8)" clip-path="url(#scr)"><use href="#darkbg"/><line x1="108" y1="0" x2="96" y2="19" stroke="#26b8c0" stroke-width="1.4"/><line x1="175.5" y1="45.6" x2="163.3" y2="67.9" stroke="#58c060" stroke-width="1.4"/><line x1="99.7" y1="104" x2="92.8" y2="115" stroke="#f0602a" stroke-width="1.4"/><polygon points="-5,84 43,84 39,92 -9,92" fill="#fff"/><polygon points="43,84 51,84 47,92 39,92" fill="#111"/><polygon points="64,84 107,84 103,92 60,92" fill="#fff"/><line x1="61" y1="91" x2="70" y2="91" stroke="#2a7ad0" stroke-width="1.5"/><polygon points="127,84 171,84 167,92 123,92" fill="#fff"/><line x1="124" y1="91" x2="133" y2="91" stroke="#d03030" stroke-width="1.5"/></g><use href="#badge"/></svg>
<div class="t fn" style="left:1707.2px;top:1064.4px">rodan-intermissi</div>
<div class="t fn" style="left:1707.2px;top:1105.2px">on-starting</div>
<svg style="left:2027.2px;top:921px" width="232" height="128"><use href="#film"/><g transform="translate(28,5.8)" clip-path="url(#scr)"><use href="#darkbg"/><line x1="111" y1="0.3" x2="91" y2="34.5" stroke="#26b8c0" stroke-width="1.5"/><line x1="176" y1="52.5" x2="158.3" y2="84" stroke="url(#lg2)" stroke-width="1.5"/><line x1="112.5" y1="89" x2="96.5" y2="115" stroke="url(#lg3)" stroke-width="1.5"/><text x="87.5" y="90" text-anchor="middle" font-family="Liberation Sans" font-weight="bold" font-style="italic" font-size="39" fill="#767676" filter="url(#bl)" textLength="118" lengthAdjust="spacingAndGlyphs">STARTET</text></g><use href="#badge"/></svg>
<div class="t fn" style="left:1997.5px;top:1064.4px">rodan-intermissi</div>
<div class="t fn" style="left:1997.5px;top:1105.2px">on-starting-blan</div>
<div class="t fn" style="left:1997.5px;top:1146.0px">k</div>
<svg style="left:2317.5px;top:921px" width="232" height="128"><use href="#film"/><g transform="translate(28,5.8)" clip-path="url(#scr)"><rect width="176" height="115" fill="#000"/><polygon points="62.0,84 106.0,84 102.0,92 58.0,92" fill="#fff"/></g><use href="#badge"/></svg>
<div class="t fn" style="left:2287.8px;top:1064.4px">rodan-intermissi</div>
<div class="t fn" style="left:2287.8px;top:1105.2px">on-twitter</div>
<svg style="left:2607.8px;top:921px" width="232" height="128"><use href="#film"/><g transform="translate(28,5.8)" clip-path="url(#scr)"><rect width="176" height="115" fill="#000"/><polygon points="125.0,84 169.0,84 165.0,92 121.0,92" fill="#fff"/></g><use href="#badge"/></svg>
<div class="t fn" style="left:2578.1px;top:1064.4px">rodan-intermissi</div>
<div class="t fn" style="left:2578.1px;top:1105.2px">on-youtube</div>
<!-- bottom panel -->
<div class="t" style="left:1315.8px;top:1292.8px;font-size:28.75px;color:#000">Dateiname:</div>
<div class="a" style="left:1477px;top:1280px;width:867px;height:50px;border:1.5px solid #7a7a7a;background:#fff"></div>
<div class="a" style="left:2298px;top:1282px;width:44px;height:46px;background:#f7f7f7"></div>
<svg style="left:2298px;top:1282px" width="44" height="46"><polyline points="16,19 24.5,27.5 33,19" fill="none" stroke="#444" stroke-width="1.6"/></svg>
<div class="t" style="left:1481.7px;top:1291.2px;font-size:30.5px;color:#000">rodan-intermission-starting</div>
<div class="a" style="left:2374px;top:1281px;width:469px;height:47px;border:1px solid #e3e3e3;background:#fafafa;overflow:hidden">
  <div class="t" style="left:4px;top:9.5px;font-size:29.7px;color:#000">Alle Mediendateien (*.mp4 *.ts *.mov</div>
  <div class="a" style="left:423px;top:0;width:48px;height:46px;background:#fafafa"></div>
</div>
<svg style="left:2806px;top:1290px" width="30" height="30"><polyline points="8,10 16,19 24,10" fill="none" stroke="#444" stroke-width="1.6"/></svg>
<div class="a" style="left:2375px;top:1344px;width:218px;height:63px;border:1.5px solid #d4d4d4;border-radius:5px;background:#fbfbfb"></div>
<div class="t" style="left:2438.7px;top:1361.8px;font-size:29.8px;color:#000">Öffnen</div>
<div class="a" style="left:2625px;top:1344px;width:218px;height:63px;border:1.5px solid #d4d4d4;border-radius:5px;background:#fbfbfb"></div>
<div class="t" style="left:2661.7px;top:1362.1px;font-size:29.7px;color:#000">Abbrechen</div>
<svg style="left:2860px;top:1413px" width="22" height="22"><g fill="#c4c4c4"><rect x="15" y="0" width="4" height="4"/><rect x="10" y="5" width="4" height="4"/><rect x="15" y="5" width="4" height="4"/><rect x="5" y="10" width="4" height="4"/><rect x="10" y="10" width="4" height="4"/><rect x="15" y="10" width="4" height="4"/><rect x="0" y="15" width="4" height="4"/><rect x="5" y="15" width="4" height="4"/><rect x="10" y="15" width="4" height="4"/><rect x="15" y="15" width="4" height="4"/></g></svg>

</body></html>
